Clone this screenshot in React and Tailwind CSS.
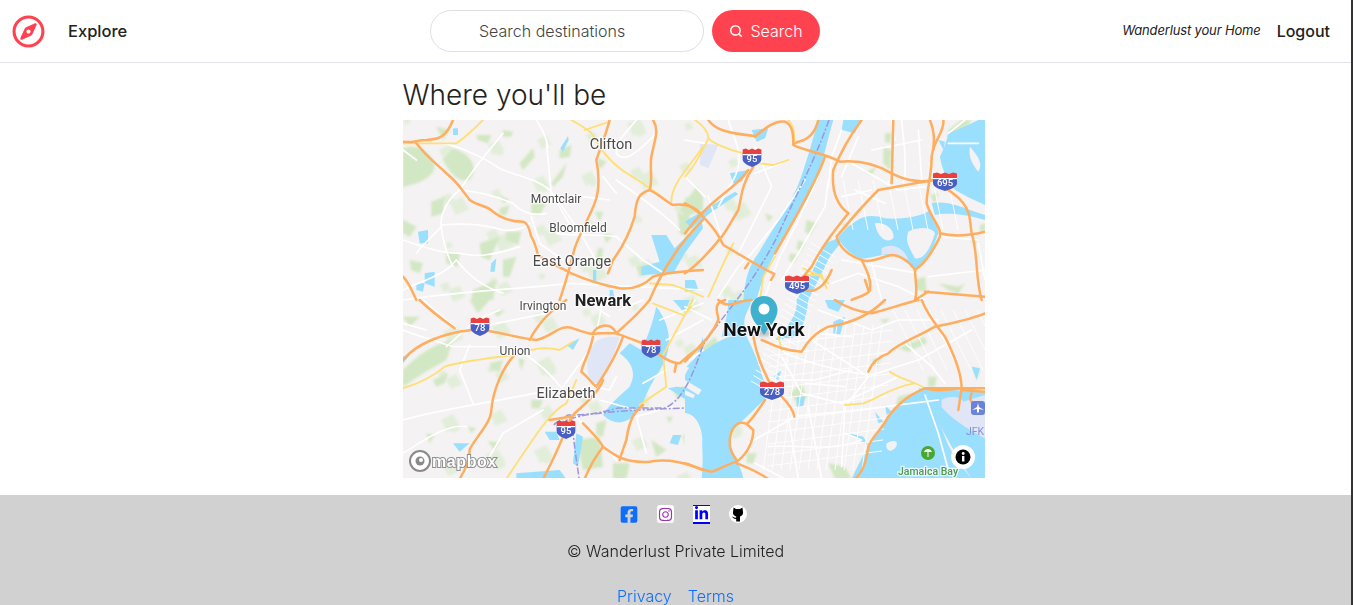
import { Search } from "lucide-react";
import { FaFacebookSquare, FaInstagram, FaLinkedinIn, FaRegCompass } from "react-icons/fa";

const font = { fontFamily: "Roboto, 'Noto Sans', sans-serif" };

// paths below are in 3x crop units, one set per map quadrant
const quad = {
  a: "translate(0 0) scale(.3333)",
  b: "translate(282 0) scale(.3333)",
  c: "translate(0 180) scale(.3333)",
  d: "translate(282 180) scale(.3333)",
};

const greens = {
  a: [
    "M0 85 C40 70 70 90 90 120 C110 160 60 190 0 200Z",
    "M150 85 C200 100 230 140 200 180 C170 190 140 160 120 120Z",
    "M300 30 L330 35 L325 50 L300 50Z",
    "M220 45 L265 45 L255 70 L225 60Z",
    "M350 130 L390 85 L395 110 L360 150Z",
    "M470 90 L505 75 L500 110 L470 115Z",
    "M445 190 L490 130 L480 170 L450 200Z",
    "M385 240 L430 250 L410 285 L385 280Z",
    "M290 225 L320 240 L300 250Z",
    "M290 265 L320 255 L310 285 L290 285Z",
    "M310 335 L355 335 L345 375 L310 360Z",
    "M85 245 L125 230 L120 280 L85 290Z",
    "M130 395 L170 400 L165 440 L130 430Z",
    "M210 510 L280 480 L270 540 L205 540Z",
    "M585 115 L610 125 L595 145 L585 140Z",
    "M575 275 L600 275 L590 305Z",
    "M600 340 L630 345 L610 370Z",
    "M585 385 L600 385 L595 440 L575 440Z",
    "M830 270 L880 200 L900 230 L900 270 L850 290Z",
    "M825 280 L860 290 L850 350 L830 340Z",
    "M700 440 L750 430 L740 460 L710 470Z",
    "M0 300 L40 320 L20 350 L0 340Z",
    "M20 420 L60 430 L50 460 L25 450Z",
    "M230 370 L290 350 L260 420 L235 410Z",
    "M100 20 L140 30 L120 60Z",
    "M300 420 L340 410 L320 470 L300 470Z",
  ],
  b: [
    "M595 80 L620 90 L615 150 L595 130Z",
    "M545 155 L575 140 L560 165Z",
    "M600 40 L620 40 L615 70 L600 65Z",
    "M240 280 L265 290 L250 305Z",
    "M365 300 L395 310 L375 345 L360 335Z",
    "M340 360 L360 370 L345 395 L335 385Z",
    "M315 400 L340 405 L325 430 L312 420Z",
    "M790 30 L830 0 L860 0 L820 60 L790 70Z",
    "M735 225 L760 220 L750 255Z",
    "M0 235 L50 220 L40 260 L0 275Z",
    "M0 290 L40 300 L20 330 L0 330Z",
    "M480 310 L500 325 L475 335Z",
    "M690 480 L720 470 L725 515 L695 510Z",
    "M760 490 L820 500 L840 490 L820 520 L790 510Z",
    "M860 360 L875 355 L870 385Z",
    "M885 315 L900 310 L900 335 L885 335Z",
  ],
  c: [
    "M0 210 C40 170 90 130 150 120 L130 180 L60 220 L0 260Z",
    "M260 190 L300 180 L290 215 L265 210Z",
    "M90 240 L135 220 L125 250 L100 260Z",
    "M385 300 L420 300 L410 325 L385 325Z",
    "M345 175 L365 180 L355 210Z",
    "M270 35 L305 30 L285 50Z",
    "M200 0 L260 0 L225 40Z",
    "M760 200 L780 190 L765 225Z",
    "M810 270 L840 280 L825 300Z",
    "M580 370 L610 360 L600 410 L580 405Z",
    "M520 420 L590 410 L600 500 L540 510Z",
    "M630 490 L680 490 L670 537 L630 537Z",
    "M745 420 L790 450 L760 470Z",
    "M70 400 L95 405 L80 430Z",
    "M255 425 L290 425 L275 450Z",
    "M195 380 L220 385 L205 400Z",
    "M790 350 L810 350 L800 370Z",
    "M0 50 L50 50 L20 80Z",
  ],
  d: [
    "M315 280 L350 250 L365 290 L345 320Z",
    "M190 180 L215 170 L205 195 L180 200Z",
    "M30 160 L90 110 L100 130 L50 185Z",
    "M640 145 L720 110 L725 130 L670 155Z",
    "M585 60 L615 55 L600 70Z",
    "M730 230 L755 230 L750 260 L730 260Z",
    "M185 460 L215 460 L205 490 L185 490Z",
    "M70 495 L110 495 L90 520Z",
    "M600 420 L645 420 L620 455Z",
    "M430 490 L480 500 L500 537 L450 537Z",
    "M530 470 L590 500 L570 537 L530 510Z",
    "M640 290 L680 280 L670 350 L620 360Z",
    "M560 180 L590 170 L575 205Z",
    "M865 200 L885 210 L875 240Z",
  ],
};

const waters = {
  a: [
    "M472 85 L495 48 L497 60 L480 95Z",
    "M45 335 L75 330 L75 370 L50 370Z",
    "M65 460 L95 455 L95 500 L65 490Z",
    "M40 490 L65 490 L60 515 L40 510Z",
    "M265 430 L280 415 L275 455 L262 455Z",
    "M745 345 L790 345 L815 385 L860 340 L895 300 L900 325 L845 400 L810 462 L770 462 L715 465 L715 440 L770 425Z",
    "M570 450 L580 450 L580 490 L570 480Z",
    "M620 510 L630 510 L635 540 L620 540Z",
    "M150 25 L165 25 L165 45 L150 45Z",
  ],
  b: [
    "M400 0 L445 0 C430 50 420 100 395 180 C360 260 310 320 270 400 C250 440 230 480 215 540 L175 540 C180 480 190 440 220 400 C260 330 320 250 345 180 C370 110 385 50 400 0Z",
    "M790 40 C830 25 860 10 880 0 L900 0 L900 255 L850 232 L810 210 C790 180 770 150 765 110 C775 90 785 65 790 40Z",
    "M740 250 C780 240 830 260 855 270 L900 285 L900 300 C850 285 790 275 750 285Z",
    "M470 340 C510 300 540 275 600 295 C660 300 720 285 735 270 C745 290 760 320 760 340 C740 400 720 430 690 450 C660 420 640 405 620 405 C590 400 540 420 525 415 C500 405 470 380 460 350Z",
    "M420 370 L470 350 C470 380 440 390 425 430 L370 540 L335 540 C370 480 400 420 420 370Z",
    "M0 305 L60 268 L150 215 L160 222 L80 276 L20 325Z",
    "M135 160 L190 150 L170 185 L145 190Z",
    "M0 480 L30 480 L40 510 L0 515Z",
    "M475 0 L525 0 L510 40 L470 30Z",
    "M200 30 L250 25 L240 55 L215 65Z",
    "M760 60 L780 65 L775 90Z",
  ],
  c: [
    "M760 20 C790 60 810 110 790 170 C770 220 740 250 720 310 C690 370 640 385 600 345 C620 310 660 280 680 260 C700 220 690 190 650 160 L680 130 L715 150 C740 100 750 60 760 20Z",
    "M900 110 L880 170 L850 200 L900 215Z",
    "M820 260 L900 265 L900 320 L860 305 L795 265Z",
    "M870 360 L900 340 L900 420 L880 420Z",
    "M810 0 L860 0 L845 40Z",
    "M810 405 L835 405 L825 435 L800 430Z",
    "M490 135 L530 115 L510 150Z",
    "M150 430 L200 430 L170 455Z",
    "M425 395 L460 395 L470 420 L440 420Z",
    "M520 400 L540 410 L525 500 L510 490Z",
    "M340 520 L470 510 L490 537 L340 537Z",
    "M0 170 L25 160 L0 190Z",
  ],
  d: [
    "M0 225 C40 150 110 110 180 100 C200 140 235 210 245 290 C200 340 160 370 135 400 C120 440 170 490 175 537 L50 537 C55 480 55 420 40 375 C30 350 10 340 0 340Z",
    "M130 0 L200 0 C195 30 160 60 190 100 L110 110 C120 70 130 40 130 0Z",
    "M335 0 L370 0 C365 50 350 90 335 110 L270 120 C310 80 340 40 335 0Z",
    "M500 537 C540 450 590 370 625 335 C660 300 690 270 720 265 L780 410 C800 470 850 520 860 537Z",
    "M700 265 L900 275 L900 537 L860 537 C800 450 760 360 700 265Z",
    "M490 400 L535 410 L550 435 L520 420Z",
    "M570 335 L595 365 L580 370Z",
    "M600 315 L620 335 L605 345Z",
    "M265 230 L290 210 L280 240Z",
    "M860 200 L885 205 L875 240Z",
    "M445 65 L480 50 L465 105 L445 100Z",
    "M335 290 L360 290 L355 320 L335 320Z",
    "M420 0 L480 0 L460 35 L430 25Z",
  ],
};

const lands = {
  b: [
    "M570 310 C600 305 630 330 625 355 C600 375 575 345 570 310Z",
    "M670 335 C700 320 740 320 750 340 C735 390 715 420 690 415 C670 380 660 360 670 335Z",
    "M855 80 C880 110 895 130 880 155 C860 130 850 110 855 80Z",
  ],
  d: [
    "M0 340 C25 340 50 370 52 420 C52 470 30 495 0 490Z",
    "M605 430 C630 415 645 425 630 445 C615 460 600 450 605 430Z",
    "M0 240 L50 270 L40 285 L0 260Z",
    "M0 270 L30 285 L25 295 L0 285Z",
  ],
};

const lavender = {
  b: ["M590 385 C620 365 660 385 670 420 L650 412 C630 400 610 400 590 405Z", "M45 70 L100 75 L70 145 L45 135Z"],
  c: ["M560 170 C560 130 590 105 650 110 C640 150 610 220 580 250 C555 240 545 200 560 170Z"],
  d: ["M770 300 C790 285 830 290 835 305 L900 285 L900 415 C860 395 790 350 770 320Z"],
};

const whites = {
  a: [
    "M300 40 C260 90 230 120 170 210 C130 240 110 290 115 320 C90 350 60 370 40 400",
    "M0 90 L40 120 M120 70 C170 80 240 110 290 145 C340 170 390 170 440 210 C480 260 530 330 590 440",
    "M170 210 C210 215 260 220 330 250 C360 280 390 290 430 280",
    "M115 315 C180 310 230 310 300 330 C340 335 370 320 380 310",
    "M0 360 C60 380 110 400 170 400 C220 410 260 410 350 380",
    "M0 510 C60 480 120 470 160 420 M160 420 C200 470 240 500 300 520",
    "M115 320 C120 370 130 400 150 440",
    "M430 60 C435 120 440 170 445 220 C470 260 490 300 520 340",
    "M400 0 C420 30 430 50 435 80",
    "M460 340 C520 350 580 340 640 350 L720 420 L800 470",
    "M640 100 C660 130 700 100 740 60 L760 40 M640 180 C680 210 760 260 830 330",
    "M0 540 C200 510 320 510 500 490 L900 510",
    "M700 0 L650 60 L640 100",
    "M385 290 L410 370 L480 420",
    "M600 170 L640 220 M540 230 L620 240",
  ],
  b: [
    "M0 170 L60 230 M0 60 L60 70 M130 0 C150 70 180 100 150 170 L100 260",
    "M360 180 L280 300 L200 400 L160 440 L100 530",
    "M400 170 L340 300 L280 420 L240 530",
    "M430 180 L420 260 L340 400 L290 480",
    "M470 30 L440 110 L430 200 M520 50 L470 170",
    "M500 130 L640 210 L720 200 M510 210 L600 250 M470 230 L560 210",
    "M620 0 L630 60 M650 0 L660 100 L660 180 M700 30 L710 180 M560 90 L710 60",
    "M790 70 L880 70 M840 0 L790 40",
    "M470 420 L700 460 M440 490 L520 460 L640 500 L720 540 M560 430 L590 540",
    "M770 350 L880 360 M880 370 L900 480 M730 470 L900 450",
    "M210 80 L260 200 L160 400 M70 230 L110 350 M210 160 L290 130",
  ],
  c: [
    "M0 90 C50 110 90 120 150 140 L280 140 M60 0 L160 85",
    "M0 360 C100 330 250 310 420 275",
    "M130 140 L220 60 L290 30 M430 40 L280 70 L150 100",
    "M360 160 C410 190 450 230 480 270 M480 260 L560 150",
    "M200 135 L170 210 L210 310 M0 70 L70 90",
    "M0 460 C50 430 130 370 190 380",
    "M420 330 L300 400 L260 470 L200 500 L170 537",
    "M560 10 L620 50 M600 0 L580 100 M650 30 L720 0 M770 60 L900 10",
    "M640 230 L620 270 L570 260 M720 250 L790 210 M810 320 L700 350 L730 460",
    "M590 300 L700 330 M520 350 L640 480",
    "M790 120 L900 60 M860 180 L900 150",
  ],
  d: [
    "M300 160 C400 200 500 220 560 225 L700 180 L860 90",
    "M290 170 L350 280 L470 310 L640 230",
    "M380 120 L520 210 L550 230 L480 320 L470 500",
    "M320 350 L520 330 L760 300",
    "M310 350 L340 537 M370 320 L410 537",
    "M250 440 C320 430 430 460 530 420 L480 400",
    "M660 130 L740 200 L780 250",
    "M720 285 L760 400 L790 510",
    "M560 90 L640 60 L760 60 M400 30 L560 90 M400 100 L500 110",
    "M190 430 L330 350 M210 490 L300 537",
    "M500 210 L390 240 L290 240 M480 260 L360 250",
    "M0 20 L80 60 M30 0 L0 40",
  ],
};

const yellows = {
  a: [
    "M0 70 L160 70 C190 50 220 20 240 0",
    "M505 0 C530 15 560 30 570 45 C590 85 620 130 680 165 C730 195 770 225 800 250",
    "M545 30 L620 5",
    "M900 80 C860 140 805 190 805 245",
    "M740 490 L810 495 L850 510 L900 530",
  ],
  b: [
    "M30 0 C60 20 70 40 70 55 C85 70 130 90 175 100 L225 130 L265 135 L310 120",
    "M70 55 C50 100 20 150 0 170",
    "M310 0 C330 20 330 50 325 75",
    "M145 370 L120 420 L70 530",
    "M270 410 L235 470 L225 540",
    "M355 445 L400 465 L430 490 M365 465 L410 465 L425 505",
  ],
  c: [
    "M0 265 C50 250 90 230 125 200 C170 185 250 175 335 165",
    "M385 150 C420 140 450 145 470 150 L510 125",
    "M520 240 L490 310 C450 330 420 370 310 537",
    "M750 10 L840 45 M870 0 L780 165 L790 260 L710 315",
  ],
  d: [
    "M0 40 L20 20",
    "M280 110 L290 150",
    "M480 315 L535 310 C570 300 620 260 690 250",
    "M615 215 C640 235 690 245 720 265",
  ],
};

const oranges = {
  a: [
    "M0 65 C30 70 40 60 70 60 C110 58 130 50 150 0",
    "M40 70 C70 110 110 140 130 160 C160 185 170 200 200 240 C225 258 250 255 270 275 C295 295 320 305 360 305 C380 310 380 340 385 350 C395 365 400 385 405 405 C440 430 480 445 505 460 C550 480 600 495 650 505 C700 510 730 490 750 470 C780 460 820 455 900 450",
    "M620 0 C610 40 590 90 580 120 C590 170 590 210 575 250 C555 300 530 340 515 385 C505 420 495 470 470 540",
    "M750 0 C770 30 755 60 745 110 C740 150 750 180 740 210 C710 220 700 230 695 290 C680 340 660 380 630 420 L615 460",
    "M740 210 C770 225 790 245 810 255 C850 250 880 260 900 290",
    "M900 300 C850 350 790 420 740 540",
    "M0 470 C20 490 30 520 40 540",
  ],
  b: [
    "M70 0 C90 30 130 40 210 48",
    "M210 50 C240 25 270 0 300 5 C325 15 325 50 325 75 C350 90 420 100 465 125 C520 120 570 130 620 160 C660 180 700 190 745 180",
    "M400 0 C390 40 370 60 340 65 L325 72",
    "M530 0 C500 40 470 90 445 150 C440 200 450 250 490 280",
    "M205 140 C170 190 170 230 160 270 C130 320 120 340 110 350 C70 400 30 440 0 460",
    "M190 150 C150 210 80 230 0 340",
    "M0 250 C40 270 90 320 115 375 C160 400 220 440 268 462 L258 480",
    "M190 430 L180 445",
    "M420 110 C400 170 340 280 270 400",
    "M490 280 C450 330 410 380 380 440 L330 500",
    "M625 0 L620 190 M735 0 C750 40 750 70 740 110 C740 170 725 210 725 250 C740 300 770 320 765 350 C740 400 720 430 690 450 C670 420 640 405 620 405 C590 410 560 430 530 420 C495 410 460 380 455 350 C480 320 520 270 580 210 L745 180",
    "M775 0 C780 30 750 60 745 90",
    "M530 420 C545 450 560 480 555 510 C550 525 520 530 500 540",
    "M690 450 C690 480 700 510 690 540 L730 515 M720 515 L900 530",
    "M745 180 C790 210 850 240 855 300 L860 340 C880 400 870 470 890 540",
    "M765 340 C800 350 840 350 900 335",
    "M540 480 L550 510",
    "M440 450 C420 500 390 520 360 510",
  ],
  c: [
    "M0 180 C40 130 120 100 205 90 C260 85 340 115 400 120 C450 110 470 70 510 85 C540 95 560 105 590 100 L640 100 L720 130 C770 165 800 190 830 190 C860 160 880 150 900 135",
    "M50 0 C80 30 120 60 155 85",
    "M490 0 C430 40 400 80 380 120 M740 0 C700 50 660 80 640 100 C620 60 580 80 570 100",
    "M570 110 C560 160 540 190 535 215 C560 235 565 250 580 260 C620 200 650 140 660 110",
    "M600 240 C590 270 550 310 515 340 L500 362",
    "M335 165 C300 200 270 270 265 330 C265 370 210 420 200 450 C200 490 180 520 170 537",
    "M500 350 L440 360 M540 370 C570 400 590 420 600 440 C640 470 670 490 740 485 C800 475 850 490 900 510",
    "M600 440 C570 480 555 510 545 537",
    "M480 410 C460 460 440 500 420 537",
    "M820 190 L815 215 M720 315 C700 330 680 350 670 420 C660 450 655 460 650 480",
  ],
  d: [
    "M120 0 C80 10 100 40 100 60 C80 110 40 140 0 185",
    "M205 110 C215 170 235 210 255 250",
    "M290 290 C310 310 325 330 328 350",
    "M240 300 C220 330 200 360 185 372 C150 355 130 400 135 440 C140 470 160 480 155 485 C190 460 205 420 205 390 L185 372",
    "M155 485 C120 495 90 515 80 515 C50 510 20 495 0 490",
    "M155 490 C180 500 210 510 250 537",
    "M450 0 C480 20 520 35 560 40 C600 30 660 10 700 0",
    "M100 0 C130 30 160 0 200 0",
    "M230 120 C260 130 280 150 350 155 C370 120 390 100 430 80 C500 70 560 40 600 0",
    "M550 215 C560 190 580 170 610 160 C640 130 680 120 750 80 C800 70 850 60 900 40",
    "M710 0 C730 50 755 75 780 110 C810 170 830 220 830 265 L820 330 M830 265 C780 270 760 275 720 265 C680 280 640 310 610 350 C590 390 560 410 550 440 C545 490 530 520 510 537",
    "M720 265 L900 265 M830 270 L900 275 M860 280 C850 300 860 310 880 320",
  ],
};

const labels = [
  { t: "Clifton", x: 208, y: 29, s: 14.5, w: 400 },
  { t: "Montclair", x: 153, y: 83, s: 12, w: 400 },
  { t: "Bloomfield", x: 175, y: 112, s: 12, w: 400 },
  { t: "East Orange", x: 169, y: 146, s: 14.5, w: 400 },
  { t: "Newark", x: 200, y: 186, s: 16.5, w: 700, c: "#222" },
  { t: "Irvington", x: 140, y: 190, s: 12, w: 400 },
  { t: "Union", x: 112, y: 235, s: 12, w: 400 },
  { t: "Elizabeth", x: 163, y: 278, s: 14.5, w: 400 },
  { t: "Jamaica Bay", x: 525, y: 355, s: 10.5, w: 500, c: "#4f9a4f" },
];

const shields = [
  { n: "95", x: 349, y: 38, k: 0.78 },
  { n: "695", x: 542, y: 62 },
  { n: "495", x: 394, y: 165 },
  { n: "78", x: 77, y: 207, k: 0.78 },
  { n: "78", x: 248, y: 229, k: 0.78 },
  { n: "95", x: 163, y: 310, k: 0.78 },
  { n: "278", x: 369, y: 271 },
];

// pale mottling over the western suburbs
const mottle = [];
for (let i = 0; i < 90; i++) {
  const x = (i * 47) % 330;
  const y = (i * 83) % 358;
  const r = 5 + (i * 7) % 9;
  mottle.push(`M${x} ${y} L${x + r} ${y - r / 2} L${x + r * 1.6} ${y + r / 2} L${x + r / 2} ${y + r}Z`);
}

// cross streets along Manhattan and a loose Brooklyn / Queens street grid
const streets = [];
for (let i = 0; i < 26; i++) {
  const t = i / 25;
  const cx = 368 + (428 - 368) * t - 8;
  const cy = 268 - (268 - 130) * t;
  streets.push(`M${cx - 12} ${cy - 7} L${cx + 12} ${cy + 7}`);
}
for (let i = 0; i < 12; i++) {
  streets.push(`M${380 + i * 9} 205 L${360 + i * 9} 350`);
  streets.push(`M365 ${225 + i * 11} L${490 - i} ${210 + i * 11}`);
}
for (let i = 0; i < 8; i++) {
  streets.push(`M${440 + i * 15} 60 L${450 + i * 15} 110`);
  streets.push(`M${490 + i * 12} 190 L${520 + i * 12} 250`);
}

function Layer({ data, ...props }) {
  return (
    <g {...props}>
      {Object.keys(data).map((k) => (
        <g key={k} transform={quad[k]}>
          {data[k].map((d, i) => (
            <path key={i} d={d} />
          ))}
        </g>
      ))}
    </g>
  );
}

function Shield({ n, x, y, k = 1 }) {
  return (
    <g transform={`translate(${x} ${y}) scale(${k} 1)`}>
      <path d="M-12 -8.5 L-8 -9.5 L-4 -8 L0 -9.5 L4 -8 L8 -9.5 L12 -8.5 L12 -3 L-12 -3Z" fill="#e8403f" />
      <path d="M-12 -3.5 H12 V1 C12 5 6 7 0 9 C-6 7 -12 5 -12 1Z" fill="#4a5fc4" />
      <rect x="-12" y="-4" width="24" height="1.2" fill="#fff" />
      <text x="0" y="4" textAnchor="middle" fontSize="9.5" fontWeight="500" fill="#fff" transform={`scale(${1 / k} 1)`}>
        {n}
      </text>
    </g>
  );
}

function MapView() {
  return (
    <svg viewBox="0 0 582 358" className="block h-[358px] w-[582px]" style={font}>
      <defs>
        <filter id="soft" x="-10%" y="-10%" width="120%" height="120%">
          <feGaussianBlur stdDeviation="0.9" />
        </filter>
        <filter id="pinShadow" x="-50%" y="-50%" width="200%" height="200%">
          <feGaussianBlur stdDeviation="2" />
        </filter>
      </defs>
      <rect width="582" height="358" fill="#f4f2f2" />
      <path d={mottle.join(" ")} fill="#e2eeda" filter="url(#soft)" />
      <Layer data={greens} fill="#d2e7c3" filter="url(#soft)" />
      <Layer data={waters} fill="#9bdfff" />
      <Layer data={lands} fill="#f4f2f2" />
      <Layer data={lavender} fill="#e1e6f6" />
      <path d={streets.join(" ")} fill="none" stroke="#fff" strokeWidth="0.9" />
      <Layer data={whites} fill="none" stroke="#fff" strokeWidth="5" strokeLinecap="round" strokeLinejoin="round" />
      <path
        d="M426 0 C410 45 395 70 375 115 C350 165 320 195 300 225 C290 255 280 280 262 288 L215 288 C200 292 190 295 165 295 L150 305 L170 298 C190 292 230 290 282 288"
        fill="none"
        stroke="#9b96de"
        strokeWidth="1.5"
        strokeDasharray="7 2 2 2"
      />
      <path d="M168 296 L172 330 L176 358" fill="none" stroke="#9b96de" strokeWidth="1.5" strokeDasharray="7 2 2 2" />
      <Layer data={yellows} fill="none" stroke="#ffdf75" strokeWidth="5.5" strokeLinecap="round" strokeLinejoin="round" />
      <Layer data={oranges} fill="none" stroke="#ffad5e" strokeWidth="7.5" strokeLinecap="round" strokeLinejoin="round" />
      {shields.map((s, i) => (
        <Shield key={i} {...s} />
      ))}
      {labels.map((l) => (
        <text
          key={l.t}
          x={l.x}
          y={l.y}
          textAnchor="middle"
          fontSize={l.s}
          fontWeight={l.w}
          fill={l.c || "#4a4a4a"}
          stroke="#fff"
          strokeOpacity="0.75"
          strokeWidth="2.5"
          paintOrder="stroke"
        >
          {l.t}
        </text>
      ))}
      {/* JFK marker */}
      <rect x="568" y="281" width="14" height="14" rx="3" fill="#6a82d8" />
      <path d="M575 283 L576 287 L581 290 L576 289 L576 292 L575 293 L574 292 L574 289 L569 290 L574 287Z" fill="#fff" />
      <text x="563" y="315" fontSize="10.5" fill="#7f92dc">
        JFK
      </text>
      {/* Jamaica Bay park dot */}
      <circle cx="525" cy="333" r="7" fill="#47a82f" />
      <path d="M521 332 C522 328 528 328 529 332Z M524.5 332 H525.5 V337 H524.5Z" fill="#fff" />
      {/* pin */}
      <ellipse cx="361" cy="213" rx="8" ry="3" fill="#000" opacity="0.25" filter="url(#pinShadow)" />
      <path
        d="M361 215 C356 206 347.5 200 347.5 190 C347.5 182 353.5 176 361 176 C368.5 176 374.5 182 374.5 190 C374.5 200 366 206 361 215Z"
        fill="#3fb1ce"
      />
      <circle cx="361" cy="189" r="5.5" fill="#fff" />
      <text
        x="361"
        y="216"
        textAnchor="middle"
        fontSize="19"
        fontWeight="700"
        fill="#111"
        stroke="#fff"
        strokeOpacity="0.7"
        strokeWidth="2"
        paintOrder="stroke"
      >
        New York
      </text>
      {/* mapbox wordmark */}
      <circle cx="17" cy="341" r="10" fill="#fff" fillOpacity="0.9" stroke="#8a8a8a" strokeWidth="2" />
      <circle cx="17" cy="341" r="4.5" fill="#8a8a8a" />
      <circle cx="18" cy="340" r="2" fill="#fff" />
      <text
        x="29"
        y="347"
        fontFamily="'Liberation Sans', sans-serif"
        fontSize="16"
        fontWeight="700"
        letterSpacing="0.6"
        fill="#fff"
        stroke="#8f8f8f"
        strokeWidth="2"
        paintOrder="stroke"
      >
        mapbox
      </text>
      {/* attribution button */}
      <circle cx="560" cy="337" r="12" fill="#fff" />
      <circle cx="560" cy="337" r="7.5" fill="#000" />
      <rect x="559" y="336" width="2.4" height="5.5" fill="#fff" />
      <circle cx="560.2" cy="333.5" r="1.4" fill="#fff" />
    </svg>
  );
}

function Octocat() {
  return (
    <svg viewBox="0 0 18 18" className="h-[18px] w-[18px]">
      <circle cx="9" cy="9" r="9" fill="#fff" />
      <path
        d="M4.6 2.5 L7 4 H11 L13.4 2.5 L14 7 C14.4 10 12.5 11 11 11.5 V16.5 H7.2 V14 C5 14.2 4 13 3 11.5 C4.5 12 5.3 13.2 7.2 12.5 V11.5 C5.6 11 3.6 10 4 7Z"
        fill="#000"
      />
    </svg>
  );
}

export default function App() {
  return (
    <div className="flex h-[605px] overflow-hidden bg-white font-['Inter',sans-serif] text-[#222]">
      <div className="flex min-w-0 flex-1 flex-col">
        <nav className="flex h-[63px] shrink-0 items-center border-b border-[#e2e2ea] pl-[12px] pr-[21px]">
          <FaRegCompass className="h-[33px] w-[33px] text-[#ff424f]" />
          <a className="ml-[23px] w-[59px] text-[16.5px] font-medium">Explore</a>
          <div className="ml-[303px] flex items-center gap-2">
            <div className="flex h-[42px] w-[274px] items-center rounded-full border border-[#e0e0e0] pl-[48px] text-[16px] font-light text-[#444]">
              Search destinations
            </div>
            <button className="flex h-[42px] w-[108px] items-center justify-center gap-[7px] rounded-full bg-[#ff424f] text-[16px] font-light text-white">
              <Search className="h-[14px] w-[14px]" strokeWidth={2.5} />
              Search
            </button>
          </div>
          <span className="ml-auto text-[13px] italic tracking-[-0.15px]">Wanderlust your Home</span>
          <a className="ml-4 text-[16px] font-medium">Logout</a>
        </nav>
        <main className="flex h-[432px] shrink-0 flex-col items-center pl-[36px]">
          <div className="w-[582px]">
            <h3 className="mt-[13px] text-[28px] font-light leading-[38px]">Where you'll be</h3>
            <div className="mt-[6px]">
              <MapView />
            </div>
          </div>
        </main>
        <footer className="flex flex-1 flex-col items-center bg-[#d1d1d1]">
          <div className="mt-[10px] flex h-[18px] items-center gap-[19px] pl-[16px]">
            <FaFacebookSquare className="h-[19px] w-[18px] text-[#0d6efd]" />
            <span className="flex h-[18px] w-[17px] items-center justify-center rounded-[3px] bg-white">
              <FaInstagram className="h-[15px] w-[15px] text-[#9b35b5]" />
            </span>
            <span className="flex h-[19px] w-[17px] items-center justify-center border-t border-b-2 border-[#0000ff] bg-white">
              <FaLinkedinIn className="h-[15px] w-[15px] text-[#0000ff]" />
            </span>
            <Octocat />
          </div>
          <p className="mt-[18px] text-[16px] font-light leading-[20px]">© Wanderlust Private Limited</p>
          <div className="mt-[25px] flex gap-4 text-[16px] font-light leading-[20px] text-[#0d6efd]">
            <a>Privacy</a>
            <a>Terms</a>
          </div>
        </footer>
      </div>
      <div className="w-[2px] shrink-0 bg-[#333]" />
    </div>
  );
}
